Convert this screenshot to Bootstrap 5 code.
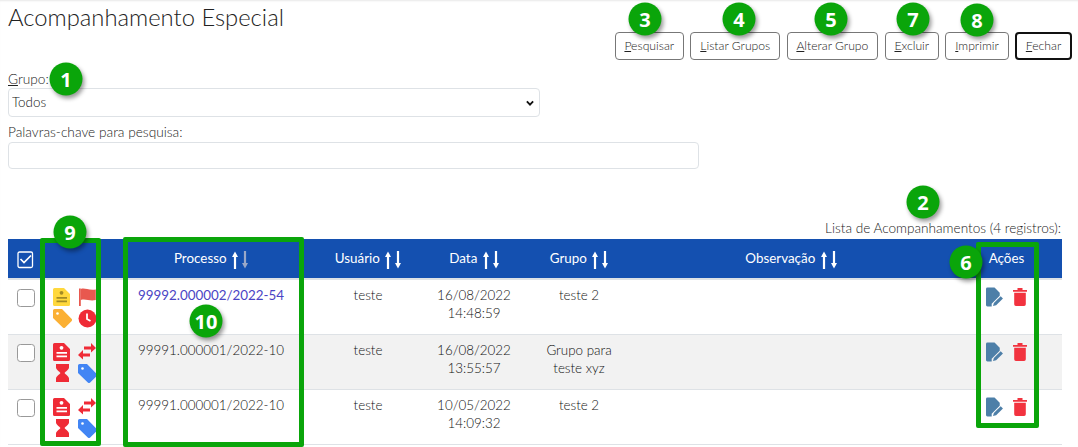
<!DOCTYPE html>
<html lang="pt-BR">
<head>
    <meta charset="UTF-8">
    <meta name="viewport" content="width=device-width, initial-scale=1.0">
    <title>Acompanhamento Especial</title>
    <link href="https://cdn.jsdelivr.net/npm/bootstrap@5.3.0/dist/css/bootstrap.min.css" rel="stylesheet">
    <style>
        body {
    position: relative;
    height: 447px;
    overflow: hidden;
    background-color: #fff;
    color: #222;
    font-family: "Lato", "Open Sans", sans-serif;
    font-size: 13.4px;
    box-shadow: inset 0 2px 2px -1px #e8e8e8;
}

.page-wrap {
    padding: 0 6px 0 8px;
}

.page-title {
    font-size: 23.8px;
    font-weight: 300;
    line-height: 34px;
    margin: 0;
    color: #222;
}

.top-btns {
    padding-top: 32px;
    gap: 6.5px;
}

.top-btn {
    font-size: 12.2px;
    font-weight: 300;
    height: 28px;
    padding: 0 8.8px;
    line-height: 26px;
    border: 1px solid #777;
    border-radius: 4px;
    color: #222;
    background: #fff;
}

.top-btn.is-focus {
    border: 2px solid #111;
    line-height: 24px;
}

.field-label {
    font-size: 13.7px;
    font-weight: 300;
    color: #222;
    margin: 0;
    line-height: 18px;
    display: block;
}

.group-select {
    width: 532px;
    height: 29px;
    padding: 0 28px 0 3px;
    font-size: 13.4px;
    font-weight: 300;
    color: #111;
    border-radius: 4px;
    background-image: url("data:image/svg+xml,%3csvg xmlns='http://www.w3.org/2000/svg' viewBox='0 0 16 16'%3e%3cpath fill='none' stroke='%23111' stroke-width='3' d='M3 5.500l5 5 5-5'/%3e%3c/svg%3e");
    background-size: 10px 10px;
    background-position: right 4px center;
    margin-bottom: 6px;
}

.words-input {
    width: 691px;
    height: 27px;
    margin-top: 1px;
    border-radius: 4px;
    font-size: 13px;
}

.list-caption {
    text-align: right;
    font-size: 13.6px;
    font-weight: 300;
    color: #222;
    width: 1053px;
    height: 19px;
    line-height: 19px;
    margin-top: 50px;
}

.follow-table {
    width: 1054px;
    table-layout: fixed;
    margin: 0;
    border-top: 1px solid #5a5a2a;
    font-size: 13.4px;
}

.follow-table thead th {
    background: #1450b0;
    color: #fff;
    font-weight: 400;
    text-align: center;
    height: 40px;
    padding: 0 4px;
    vertical-align: middle;
    border-top: 1px solid #fff;
    border-bottom: 2px solid #dee2e6;
    white-space: nowrap;
}

.follow-table tbody td {
    height: 55px;
    padding: 6px 4px 0;
    text-align: center;
    vertical-align: top;
    line-height: 18px;
    font-weight: 300;
    color: #111;
}

.follow-table tbody tr:first-child td {
    height: 56px;
}

.follow-table tbody tr:nth-child(2) td {
    background: #f2f2f2;
}

.row-check {
    width: 18px;
    height: 18px;
    margin: 3px 0 0 5px;
    border: 1px solid #999;
    border-radius: 3px;
    display: block;
}

.icon-grid {
    display: grid;
    grid-template-columns: 25px 25px;
    justify-content: center;
    row-gap: 3px;
    justify-items: center;
    margin-top: 2px;
}

.action-icons {
    display: flex;
    justify-content: center;
    align-items: center;
    gap: 9px;
    margin-top: 1px;
}

.follow-table tbody td .proc-link {
    color: #4a44c4;
    font-weight: 400;
    text-decoration: none;
}

.sort-pair {
    display: inline-flex;
    gap: 4px;
    margin-left: 2px;
    vertical-align: middle;
}

.mark-dot {
    position: absolute;
    width: 33px;
    height: 33px;
    border-radius: 50%;
    background: #0aa50a;
    color: #fff;
    font-weight: 700;
    font-size: 20px;
    line-height: 33px;
    text-align: center;
    font-family: "Open Sans", sans-serif;
    box-shadow: 2px 3px 4px rgba(0, 0, 0, .4);
    transform: translate(-50%, -50%);
    z-index: 3;
}

.mark-box {
    position: absolute;
    border: 5px solid #0aa50a;
    border-radius: 2px;
    z-index: 2;
}
    </style>
</head>
<body>
    <!-- shared icons -->
    <svg width="0" height="0" class="d-none">
        <symbol id="sort-up" viewBox="0 0 6 18"><path d="M3 18V4" stroke="currentColor" stroke-width="2.200"/><path d="M0 6L3 .5 6 6z" fill="currentColor"/></symbol>
        <symbol id="sort-down" viewBox="0 0 6 18"><path d="M3 0v14" stroke="currentColor" stroke-width="2.200"/><path d="M0 12L3 17.500 6 12z" fill="currentColor"/></symbol>
        <symbol id="doc-note" viewBox="0 0 18 18"><path d="M1.500 0H11l6 6v10.500a1.500 1.500 0 0 1-1.500 1.500h-14A1.500 1.500 0 0 1 0 16.500v-15A1.500 1.500 0 0 1 1.500 0z" fill="currentColor"/><circle cx="8.500" cy="4.800" r="1.900" fill="var(--ink)"/><path d="M3.500 9.800h10.500M3.500 13.300h10.500" stroke="var(--ink)" stroke-width="1.700"/></symbol>
        <symbol id="tag" viewBox="0 0 19 19"><path d="M1.500 0H9l9.500 9.800a1.700 1.700 0 0 1 0 2.400l-6.300 6.300a1.700 1.700 0 0 1-2.400 0L0 9V1.500A1.500 1.500 0 0 1 1.500 0z" fill="currentColor"/><circle cx="4.500" cy="4.500" r="1.300" fill="#fff"/></symbol>
        <symbol id="swap" viewBox="0 0 18 18"><path d="M6 3.500h7V0l5 5-5 4.500v-3H6z" fill="currentColor"/><path d="M12 10.500H5V7l-5 5 5 4.500v-3h7z" fill="currentColor"/></symbol>
        <symbol id="hourglass" viewBox="0 0 13 18"><path d="M0 0h13v3.500c0 2-3.500 4-4.500 5.500 1 1.500 4.500 3.500 4.500 5.500V18H0v-3.500C0 12.500 3.500 10.500 4.500 9 3.500 7.500 0 5.500 0 3.500z" fill="currentColor"/></symbol>
        <symbol id="edit" viewBox="0 0 19 20"><path d="M1.500 0H9l5.500 5.500v3.200L6 17.200V20H1.500A1.500 1.500 0 0 1 0 18.500v-17A1.500 1.500 0 0 1 1.500 0z" fill="#4d7fa8"/><path d="M8.300 16.300l7.200-7.200 2.400 2.400-7.200 7.200-3.300.9z" fill="#4d7fa8"/></symbol>
        <symbol id="trash" viewBox="0 0 14 18"><path d="M0 2h14v1.800H0zM4.500 0h5v2h-5z" fill="#f2333f"/><path d="M1.200 4.800h11.600V16.300a1.700 1.700 0 0 1-1.700 1.700H2.900a1.700 1.700 0 0 1-1.700-1.700z" fill="#f2333f"/></symbol>
    </svg>

    <div class="page-wrap">
        <div class="d-flex justify-content-between">
            <h1 class="page-title">Acompanhamento Especial</h1>
            <div class="d-flex top-btns">
                <button type="button" class="btn top-btn"><u>P</u>esquisar</button>
                <button type="button" class="btn top-btn"><u>L</u>istar Grupos</button>
                <button type="button" class="btn top-btn"><u>A</u>lterar Grupo</button>
                <button type="button" class="btn top-btn"><u>E</u>xcluir</button>
                <button type="button" class="btn top-btn"><u>I</u>mprimir</button>
                <button type="button" class="btn top-btn is-focus"><u>F</u>echar</button>
            </div>
        </div>

        <form>
            <label class="field-label mt-2" for="grupo" style="padding-top: 2px"><u>G</u>rupo:</label>
            <select class="form-select group-select" id="grupo">
                <option>Todos</option>
            </select>
            <label class="field-label" for="palavras">Palavras-chave para pesquisa:</label>
            <input type="text" class="form-control words-input" id="palavras">
        </form>

        <div class="list-caption">Lista de Acompanhamentos (4 registros):</div>

        <table class="table follow-table">
            <colgroup>
                <col style="width: 34px">
                <col style="width: 65px">
                <col style="width: 208px">
                <col style="width: 106px">
                <col style="width: 106px">
                <col style="width: 104px">
                <col style="width: 320px">
                <col style="width: 111px">
            </colgroup>
            <thead>
                <tr>
                    <th>
                        <svg width="17" height="18" viewBox="0 0 17 18" fill="none" stroke="#fff"><rect x="1" y="1" width="14.500" height="15.500" rx="1.500" stroke-width="1.300"/><path d="M3.500 8l3.500 3.500 7-7" stroke-width="1.700"/></svg>
                    </th>
                    <th></th>
                    <th>Processo <span class="sort-pair"><svg width="6" height="18"><use href="#sort-up" color="#fff"/></svg><svg width="6" height="18"><use href="#sort-down" color="#9aa8c8"/></svg></span></th>
                    <th>Usuário <span class="sort-pair"><svg width="6" height="18"><use href="#sort-up" color="#fff"/></svg><svg width="6" height="18"><use href="#sort-down" color="#fff"/></svg></span></th>
                    <th>Data <span class="sort-pair"><svg width="6" height="18"><use href="#sort-up" color="#fff"/></svg><svg width="6" height="18"><use href="#sort-down" color="#fff"/></svg></span></th>
                    <th>Grupo <span class="sort-pair"><svg width="6" height="18"><use href="#sort-up" color="#fff"/></svg><svg width="6" height="18"><use href="#sort-down" color="#fff"/></svg></span></th>
                    <th>Observação <span class="sort-pair"><svg width="6" height="18"><use href="#sort-up" color="#fff"/></svg><svg width="6" height="18"><use href="#sort-down" color="#fff"/></svg></span></th>
                    <th>Ações</th>
                </tr>
            </thead>
            <tbody>
                <tr>
                    <td><input class="form-check-input row-check" type="checkbox"></td>
                    <td>
                        <div class="icon-grid">
                            <svg width="18" height="18" style="--ink: #a38b25"><use href="#doc-note" color="#ffd83d"/></svg>
                            <svg width="17" height="18" viewBox="0 0 17 18"><path d="M0 .5h1.800V18H0z" fill="#e8584f"/><path d="M1.800 1c4-1.500 7 1.500 15 .5v10.500c-6 1.500-10-1.500-15 0z" fill="#e8584f"/></svg>
                            <svg width="19" height="19"><use href="#tag" color="#fbb034"/></svg>
                            <svg width="19" height="19" viewBox="0 0 19 19"><circle cx="9.500" cy="9.500" r="9" fill="#ef2b36"/><path d="M9 4.500v5.500l3.500 2" stroke="#fff" stroke-width="1.800" fill="none"/></svg>
                        </div>
                    </td>
                    <td><a href="#" class="proc-link">99992.000002/2022-54</a></td>
                    <td>teste</td>
                    <td>16/08/2022<br>14:48:59</td>
                    <td>teste 2</td>
                    <td></td>
                    <td>
                        <div class="action-icons">
                            <svg width="18" height="20"><use href="#edit"/></svg>
                            <svg width="14" height="18"><use href="#trash"/></svg>
                        </div>
                    </td>
                </tr>
                <tr>
                    <td><input class="form-check-input row-check" type="checkbox"></td>
                    <td>
                        <div class="icon-grid">
                            <svg width="18" height="18" style="--ink: #fff"><use href="#doc-note" color="#ef2b36"/></svg>
                            <svg width="18" height="18"><use href="#swap" color="#ef2b36"/></svg>
                            <svg width="13" height="18"><use href="#hourglass" color="#ef2b36"/></svg>
                            <svg width="19" height="19"><use href="#tag" color="#4285f4"/></svg>
                        </div>
                    </td>
                    <td>99991.000001/2022-10</td>
                    <td>teste</td>
                    <td>16/08/2022<br>13:55:57</td>
                    <td>Grupo para<br>teste xyz</td>
                    <td></td>
                    <td>
                        <div class="action-icons">
                            <svg width="18" height="20"><use href="#edit"/></svg>
                            <svg width="14" height="18"><use href="#trash"/></svg>
                        </div>
                    </td>
                </tr>
                <tr>
                    <td><input class="form-check-input row-check" type="checkbox"></td>
                    <td>
                        <div class="icon-grid">
                            <svg width="18" height="18" style="--ink: #fff"><use href="#doc-note" color="#ef2b36"/></svg>
                            <svg width="18" height="18"><use href="#swap" color="#ef2b36"/></svg>
                            <svg width="13" height="18"><use href="#hourglass" color="#ef2b36"/></svg>
                            <svg width="19" height="19"><use href="#tag" color="#4285f4"/></svg>
                        </div>
                    </td>
                    <td>99991.000001/2022-10</td>
                    <td>teste</td>
                    <td>10/05/2022<br>14:09:32</td>
                    <td>teste 2</td>
                    <td></td>
                    <td>
                        <div class="action-icons">
                            <svg width="18" height="20"><use href="#edit"/></svg>
                            <svg width="14" height="18"><use href="#trash"/></svg>
                        </div>
                    </td>
                </tr>
            </tbody>
        </table>
    </div>

    <!-- annotation marks over the screenshot -->
    <div class="mark-box" style="left: 40px; top: 238px; width: 61px; height: 208px"></div>
    <div class="mark-box" style="left: 123px; top: 237px; width: 181px; height: 210px"></div>
    <div class="mark-box" style="left: 976px; top: 242px; width: 63px; height: 186px"></div>
    <div class="mark-dot" style="left: 66px; top: 79px">1</div>
    <div class="mark-dot" style="left: 923px; top: 202px">2</div>
    <div class="mark-dot" style="left: 645px; top: 19px">3</div>
    <div class="mark-dot" style="left: 739px; top: 19px">4</div>
    <div class="mark-dot" style="left: 831px; top: 19px">5</div>
    <div class="mark-dot" style="left: 966px; top: 262px">6</div>
    <div class="mark-dot" style="left: 913px; top: 19px">7</div>
    <div class="mark-dot" style="left: 977px; top: 20px">8</div>
    <div class="mark-dot" style="left: 70px; top: 232px">9</div>
    <div class="mark-dot" style="left: 206px; top: 321px">10</div>

    <script src="https://cdn.jsdelivr.net/npm/bootstrap@5.3.0/dist/js/bootstrap.bundle.min.js"></script>
</body>
</html>
